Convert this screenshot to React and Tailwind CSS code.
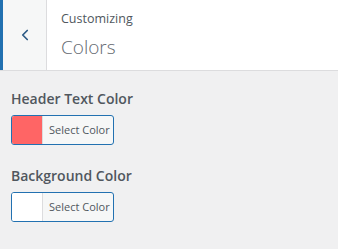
import React from 'react';
import { ChevronLeft } from 'lucide-react';

function ColorControl({ label, color }) {
  return (
    <div>
      <div className="text-[14px] font-semibold text-[#50575e] leading-[20px]">{label}</div>
      <button className="mt-[6px] flex h-[30px] w-[103px] items-stretch overflow-hidden rounded-[3px] border border-[#2271b1] bg-[#f6f7f7]">
        <span className={`w-[31px] shrink-0 border-r border-[#dcdcde] ${color}`} />
        <span className="flex-1 self-center text-left pl-[6px] text-[11px] text-[#50575e]">Select Color</span>
      </button>
    </div>
  );
}

export default function App() {
  return (
    <div className="w-[338px] h-[249px] bg-[#f0f0f1] font-['Open_Sans','Noto_Sans',sans-serif]">
      {/* Header */}
      <div className="flex h-[71px] bg-white border-b border-[#dcdcde]">
        <div className="w-[3px] bg-[#2271b1]" />
        <div className="flex w-[44px] items-center justify-center bg-[#f6f7f7] border-r border-[#dcdcde]">
          <ChevronLeft className="w-[18px] h-[18px] text-[#2c5a85]" strokeWidth={2.25} />
        </div>
        <div className="pl-[14px] pt-[10px]">
          <div className="text-[12.5px] leading-[18px] text-[#50575e]">Customizing</div>
          <div className="mt-[7px] text-[19px] leading-[24px] font-light text-[#646970]">Colors</div>
        </div>
      </div>

      {/* Controls */}
      <div className="px-[11px] pt-[18px] flex flex-col gap-[21px]">
        <ColorControl label="Header Text Color" color="bg-[#ff6565]" />
        <ColorControl label="Background Color" color="bg-white" />
      </div>
    </div>
  );
}
